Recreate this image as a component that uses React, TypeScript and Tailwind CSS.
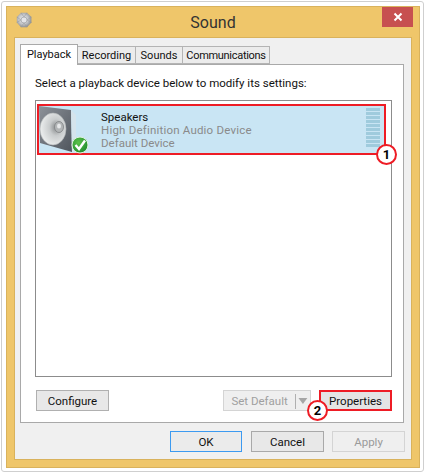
import React from 'react';

const font = "font-['Roboto','Noto_Sans',sans-serif]";

const GearIcon = () => (
  <svg width="16" height="16" viewBox="0 0 16 16">
    <defs>
      <radialGradient id="gear" cx="45%" cy="45%" r="60%">
        <stop offset="0%" stopColor="#f2f3f5" />
        <stop offset="55%" stopColor="#c4c6ca" />
        <stop offset="100%" stopColor="#85878b" />
      </radialGradient>
    </defs>
    <path d="M5 .8 L11 .8 L15.4 5 L15.4 10.5 L11 15.2 L5 15.2 L.8 10.5 L.8 5 Z" fill="url(#gear)" />
    <path d="M5 .8 L8 5 L11 .8 M15.4 5 L11 8 L15.4 10.5 M11 15.2 L8 11 L5 15.2 M.8 10.5 L5 8 L.8 5" fill="none" stroke="#9a9ca0" strokeWidth=".6" />
    <circle cx="8" cy="8" r="3" fill="#e3e4e8" stroke="#a5a7ab" strokeWidth=".8" />
  </svg>
);

const SpeakerIcon = () => (
  <svg width="50" height="49" viewBox="0 0 50 49" className="shrink-0">
    <defs>
      <linearGradient id="box" x1="0" y1="0" x2="1" y2="1">
        <stop offset="0%" stopColor="#8d9299" />
        <stop offset="100%" stopColor="#4f555d" />
      </linearGradient>
      <radialGradient id="cone" cx="62%" cy="45%" r="65%">
        <stop offset="0%" stopColor="#85888a" />
        <stop offset="40%" stopColor="#c9cccd" />
        <stop offset="100%" stopColor="#eff1f1" />
      </radialGradient>
      <radialGradient id="check" cx="40%" cy="35%" r="70%">
        <stop offset="0%" stopColor="#5cc24a" />
        <stop offset="100%" stopColor="#1f8a2e" />
      </radialGradient>
    </defs>
    <path d="M0 0 L32 4 L33 46 L1 37 Z" fill="url(#box)" />
    <path d="M32 4 L37 9 L37 40 L33 46 Z" fill="#d5e4ec" />
    <ellipse cx="14" cy="23" rx="13" ry="16" fill="url(#cone)" stroke="#aeb1b3" strokeWidth=".6" />
    <ellipse cx="20" cy="21" rx="4.5" ry="5.5" fill="#b2b5b6" stroke="#7f8284" strokeWidth=".8" />
    <ellipse cx="20" cy="20" rx="2" ry="2.5" fill="#e6e8e9" />
    <circle cx="41" cy="39" r="8" fill="url(#check)" stroke="#dff3df" strokeWidth="1" />
    <path d="M36.5 39 L40 43 L46 34.5" fill="none" stroke="#ffffff" strokeWidth="2.4" />
  </svg>
);

const Badge = ({ n, className }: { n: number; className: string }) => (
  <div className={`absolute flex h-[21px] w-[21px] items-center justify-center rounded-full border-2 border-[#ee1c25] bg-white text-[13px] font-bold text-black ${className}`}>
    {n}
  </div>
);

const Button = ({ label, className }: { label: string; className: string }) => (
  <div className={`flex items-center justify-center pt-[2px] text-[11.5px] ${className}`}>{label}</div>
);

const App: React.FC = () => {
  const meterBars = Array.from({ length: 10 });

  return (
    <div className={`${font} h-[474px] w-[426px] bg-white p-px text-[#111]`}>
      <div className="h-[471px] w-[423px] rounded-[3px] border border-[#cfcfcf] bg-white p-[4px]">
        {/* orange frame */}
        <div className="flex h-[462px] w-[414px] flex-col border border-[#d9b25c] bg-[#efc66a] px-[7px] pb-[7px]">
          <div className="relative flex h-[30px] shrink-0 items-center justify-center pt-[2px]">
            <div className="absolute left-[2px] top-[5px]">
              <GearIcon />
            </div>
            <span className="text-[16px] text-[#333]">Sound</span>
            <div className="absolute right-[-1px] top-0 flex h-[20px] w-[31px] items-center justify-center bg-[#c75050]">
              <svg width="10" height="10" viewBox="0 0 10 10">
                <path d="M1.5 1.5 L8.5 8.5 M8.5 1.5 L1.5 8.5" stroke="#fff" strokeWidth="2" />
              </svg>
            </div>
          </div>

          <div className="relative flex flex-1 flex-col border border-[#d9b25c] bg-[#f0f0f0] pl-[5px] pr-[7px] pt-[6px]">
            {/* tabs */}
            <div className="flex h-[20px] items-end text-[11px]">
              <div className="z-10 mb-[-1px] flex h-[21px] w-[58px] items-start justify-center border border-b-0 border-[#a9a9a9] bg-white pt-[2px]">
                Playback
              </div>
              <div className="flex h-[18px] w-[58px] items-center justify-center border border-l-0 border-[#b4b4b4] bg-[#ececec] pt-[2px]">Recording</div>
              <div className="flex h-[18px] w-[47px] items-center justify-center border border-l-0 border-[#b4b4b4] bg-[#ececec] pt-[2px]">Sounds</div>
              <div className="flex h-[18px] w-[87px] items-center justify-center border border-l-0 border-[#b4b4b4] bg-[#ececec] pt-[2px] tracking-[-0.3px]">Communications</div>
            </div>

            {/* panel */}
            <div className="relative flex h-[359px] w-[384px] flex-col border border-[#a9a9a9] bg-white pl-[14px] pr-[11px] pt-[10px]">
              <div className="h-[25px] text-[11.5px]">Select a playback device below to modify its settings:</div>
              <div className="h-[277px] w-[357px] border border-[#8c8c8c] bg-white pl-px pt-[3px]">
                <div className="flex h-[51px] w-[349px] items-start border-2 border-[#ee1c25] bg-[#c9e5f4]">
                  <SpeakerIcon />
                  <div className="ml-[12px] flex flex-col pt-[5px] text-[11.5px] leading-[13px]">
                    <span className="text-[#111]">Speakers</span>
                    <span className="tracking-[0.2px] text-[#8a8a8a]">High Definition Audio Device</span>
                    <span className="text-[#8a8a8a]">Default Device</span>
                  </div>
                  <div className="ml-auto mr-[4px] mt-[2px] flex flex-col gap-px">
                    {meterBars.map((_, i) => (
                      <div key={i} className="h-[3px] w-[14px] bg-[#9fcbdd]" />
                    ))}
                  </div>
                </div>
              </div>

              <div className="mt-[13px] flex h-[21px] items-center">
                <Button label="Configure" className="ml-px h-[21px] w-[73px] border border-[#b0b0b0] bg-[#e8e8e8]" />
                <div className="ml-auto flex h-[21px] w-[88px] items-center border border-[#d4d4d4] bg-[#efefef] pt-px text-[11.5px] text-[#a0a0a0]">
                  <span className="w-[73px] border-r border-[#b0b0b0] text-center leading-[15px]">Set Default</span>
                  <svg width="14" height="8" viewBox="0 0 14 8">
                    <path d="M2.5 1 H11.5 L7 7 Z" fill="#a6a6a6" />
                  </svg>
                </div>
                <Button label="Properties" className="ml-[8px] h-[21px] w-[73px] border-2 border-[#ee1c25] bg-[#e4e4e4]" />
              </div>
            </div>

            {/* dialog buttons */}
            <div className="mt-[8px] flex pl-[150px]">
              <Button label="OK" className="h-[21px] w-[72px] shrink-0 border border-[#3c9af0] bg-[#ebebeb]" />
              <Button label="Cancel" className="ml-[9px] h-[21px] w-[73px] shrink-0 border border-[#a9a9a9] bg-[#e8e8e8]" />
              <Button label="Apply" className="ml-[8px] h-[21px] w-[73px] shrink-0 border border-[#d4d4d4] bg-[#efefef] text-[#9a9a9a]" />
            </div>

            <Badge n={1} className="left-[361px] top-[106px]" />
            <Badge n={2} className="left-[292px] top-[362px]" />
          </div>
        </div>
      </div>
    </div>
  );
};

export default App;
